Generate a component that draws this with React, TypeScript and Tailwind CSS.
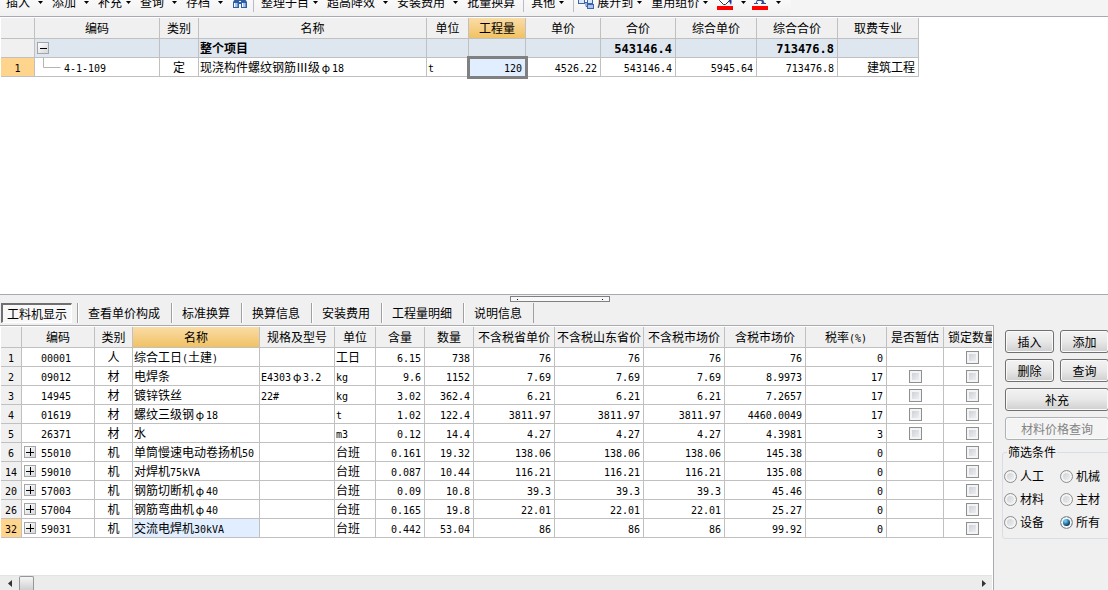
import React, { useState } from 'react';

type Align = 'left' | 'center' | 'right';

interface Column {
  name: string;
  width: number;
  align: Align;
  active?: boolean;
}

interface ToolItem {
  name?: string;
  icon?: React.FC;
  label?: string;
  arrow?: 'near' | 'far';
  separator?: boolean;
}

interface Resource {
  no: number;
  code: string;
  expandable?: boolean;
  values: string[];
  estimate?: boolean;
}

const BinocularsIcon: React.FC = () => (
  <svg width="16" height="16" viewBox="0 0 16 16" aria-hidden="true">
    <path d="M3 1h3v4h4V1h3v4l2 3v6h-6v-4H7v4H1V8l2-3z" fill="#2f5da3" />
    <path d="M2 9h4v4H2zM10 9h4v4h-4z" fill="#a9c6ee" />
    <path d="M2 9h1v4H2zM10 9h1v4h-1zM7 7h2v1H7z" fill="#fff" />
    <path d="M5 9h1v4H5zM13 9h1v4h-1z" fill="#6f97d0" />
  </svg>
);

const TreeIcon: React.FC = () => (
  <svg width="16" height="16" viewBox="0 0 16 16" aria-hidden="true">
    <path d="M3.5 3v4M6 8.5h4M8 8.5v4h2" stroke="#4a6aa8" fill="none" />
    <rect x="0.5" y="5.5" width="6" height="4" fill="#dbe8fb" stroke="#3d63ad" />
    <rect x="9.5" y="5.5" width="5" height="4" fill="#dbe8fb" stroke="#3d63ad" />
    <rect x="9.5" y="10.5" width="6" height="4" fill="#a9c4ee" stroke="#3d63ad" />
  </svg>
);

const FillIcon: React.FC = () => (
  <svg width="16" height="16" viewBox="0 0 16 16" aria-hidden="true">
    <path d="M2.5 6.5 8 1l5 5-4.5 4.5h-2z" fill="#fff" stroke="#333" />
    <path d="M11 4c4 0 4 3 3 7l-2-4z" fill="#1c2f9c" />
    <rect y="12" width="16" height="4" fill="#f00" />
  </svg>
);

const FontColorIcon: React.FC = () => (
  <svg width="16" height="16" viewBox="0 0 16 16" aria-hidden="true">
    <path d="M2 9.5h4M9 9.5h5M4 9.5 7.5 1h1" stroke="#2f4f8f" fill="none" />
    <path d="M8 1l3.5 8.5" stroke="#2f4f8f" strokeWidth="2.2" fill="none" />
    <path d="M5 6.5h5" stroke="#2f4f8f" fill="none" />
    <rect y="12" width="16" height="4" fill="#f00" />
  </svg>
);

const tools: ToolItem[] = [
  { label: '插入', arrow: 'far' },
  { label: '添加', arrow: 'far' },
  { label: '补充', arrow: 'near' },
  { label: '查询', arrow: 'far' },
  { label: '存档', arrow: 'far' },
  { name: '查找', icon: BinocularsIcon },
  { separator: true },
  { label: '整理子目', arrow: 'near' },
  { label: '超高降效', arrow: 'far' },
  { label: '安装费用', arrow: 'far' },
  { label: '批量换算' },
  { separator: true },
  { label: '其他', arrow: 'near' },
  { separator: true },
  { label: '展开到', icon: TreeIcon, arrow: 'near' },
  { label: '重用组价', arrow: 'near' },
  { name: '填充颜色', icon: FillIcon, arrow: 'far' },
  { name: '字体颜色', icon: FontColorIcon, arrow: 'far' },
];

const itemColumns: Column[] = [
  { name: '编码', width: 125, align: 'left' },
  { name: '类别', width: 39, align: 'center' },
  { name: '名称', width: 228, align: 'left' },
  { name: '单位', width: 42, align: 'left' },
  { name: '工程量', width: 57, align: 'right', active: true },
  { name: '单价', width: 75, align: 'right' },
  { name: '合价', width: 75, align: 'right' },
  { name: '综合单价', width: 81, align: 'right' },
  { name: '综合合价', width: 81, align: 'right' },
  { name: '取费专业', width: 81, align: 'right' },
];

const summaryRow = ['', '整个项目', '', '', '', '543146.4', '', '713476.8', ''];
const itemRow = ['定', '现浇构件螺纹钢筋Ⅲ级φ18', 't', '120', '4526.22', '543146.4', '5945.64', '713476.8', '建筑工程'];

const resourceColumns: Column[] = [
  { name: '编码', width: 73, align: 'left' },
  { name: '类别', width: 38, align: 'center' },
  { name: '名称', width: 127, align: 'left', active: true },
  { name: '规格及型号', width: 75, align: 'left' },
  { name: '单位', width: 41, align: 'left' },
  { name: '含量', width: 49, align: 'right' },
  { name: '数量', width: 49, align: 'right' },
  { name: '不含税省单价', width: 81, align: 'right' },
  { name: '不含税山东省价', width: 89, align: 'right' },
  { name: '不含税市场价', width: 81, align: 'right' },
  { name: '含税市场价', width: 81, align: 'right' },
  { name: '税率(%)', width: 81, align: 'right' },
  { name: '是否暂估', width: 57, align: 'center' },
  { name: '锁定数量', width: 57, align: 'center' },
];

const resources: Resource[] = [
  { no: 1, code: '00001', values: ['人', '综合工日(土建)', '', '工日', '6.15', '738', '76', '76', '76', '76', '0'] },
  { no: 2, code: '09012', estimate: true, values: ['材', '电焊条', 'E4303φ3.2', 'kg', '9.6', '1152', '7.69', '7.69', '7.69', '8.9973', '17'] },
  { no: 3, code: '14945', estimate: true, values: ['材', '镀锌铁丝', '22#', 'kg', '3.02', '362.4', '6.21', '6.21', '6.21', '7.2657', '17'] },
  { no: 4, code: '01619', estimate: true, values: ['材', '螺纹三级钢φ18', '', 't', '1.02', '122.4', '3811.97', '3811.97', '3811.97', '4460.0049', '17'] },
  { no: 5, code: '26371', estimate: true, values: ['材', '水', '', 'm3', '0.12', '14.4', '4.27', '4.27', '4.27', '4.3981', '3'] },
  { no: 6, code: '55010', expandable: true, values: ['机', '单筒慢速电动卷扬机50', '', '台班', '0.161', '19.32', '138.06', '138.06', '138.06', '145.38', '0'] },
  { no: 14, code: '59010', expandable: true, values: ['机', '对焊机75kVA', '', '台班', '0.087', '10.44', '116.21', '116.21', '116.21', '135.08', '0'] },
  { no: 20, code: '57003', expandable: true, values: ['机', '钢筋切断机φ40', '', '台班', '0.09', '10.8', '39.3', '39.3', '39.3', '45.46', '0'] },
  { no: 26, code: '57004', expandable: true, values: ['机', '钢筋弯曲机φ40', '', '台班', '0.165', '19.8', '22.01', '22.01', '22.01', '25.27', '0'] },
  { no: 32, code: '59031', expandable: true, values: ['机', '交流电焊机30kVA', '', '台班', '0.442', '53.04', '86', '86', '86', '99.92', '0'] },
];

const tabs = ['工料机显示', '查看单价构成', '标准换算', '换算信息', '安装费用', '工程量明细', '说明信息'];
const filters = ['人工', '机械', '材料', '主材', '设备', '所有'];

const alignClasses: Record<Align, string> = {
  left: 'pl-px text-left',
  center: 'text-center',
  right: 'pr-[3px] text-right',
};

const cellClasses = 'border-r border-b border-[#c0c0c0] p-0 whitespace-nowrap overflow-hidden';
const activeHeader = 'bg-linear-to-b from-[#fadca6] to-[#f1c262]';

// Latin runs use a narrow mono face, half the width of a Chinese character
const Mixed: React.FC<{ text: string; bold?: boolean }> = ({ text, bold }) => (
  <>
    {text.split(/(φ|[\x20-\x7e]+)/).filter(Boolean).map((part, i) => {
      if (part === 'φ') {
        return <span key={i} className="inline-block w-3 text-center text-[11px] leading-none">φ</span>;
      }
      if (/^[\x20-\x7e]+$/.test(part)) {
        return (
          <span key={i} className={`font-['DejaVu_Sans_Mono',monospace] leading-none ${bold ? 'text-[12px]' : 'text-[10px]'}`}>
            {part}
          </span>
        );
      }
      return <React.Fragment key={i}>{part}</React.Fragment>;
    })}
  </>
);

const HeaderRow: React.FC<{ columns: Column[] }> = ({ columns }) => (
  <thead>
    <tr className="h-[21px] bg-[#f0f0f0]">
      <th className={cellClasses} aria-label="行号" />
      {columns.map((col) => (
        <th key={col.name} className={`${cellClasses} font-normal ${col.active ? activeHeader : ''}`}>
          <Mixed text={col.name} />
        </th>
      ))}
    </tr>
  </thead>
);

const Columns: React.FC<{ first: number; columns: Column[] }> = ({ first, columns }) => (
  <colgroup>
    <col style={{ width: first }} />
    {columns.map((col) => (
      <col key={col.name} style={{ width: col.width }} />
    ))}
  </colgroup>
);

const Expander: React.FC<{ open?: boolean }> = ({ open }) => (
  <button
    aria-label={open ? '收起' : '展开'}
    className="block size-3 shrink-0 border border-[#a5a5a5] bg-linear-to-br from-white to-[#d4d7dc]"
  >
    <svg width="10" height="10" viewBox="0 0 10 10" className="block">
      <path d={open ? 'M2 5.5h7' : 'M1 5.5h8M5.5 1v8'} stroke="#000" fill="none" />
    </svg>
  </button>
);

const CheckBox: React.FC<{ label: string }> = ({ label }) => (
  <input
    type="checkbox"
    aria-label={label}
    className="mx-auto block size-[13px] appearance-none border border-[#8e8f8f] bg-linear-to-br from-[#c4c9d3] to-[#f6f6f6] shadow-[inset_0_0_0_2px_#f4f4f4] checked:bg-[#3c7fb1]"
  />
);

const Toolbar: React.FC = () => (
  <div className="flex h-[17px] items-end overflow-hidden border-b border-[#a9a9b0] bg-[#f4f4f5]">
    <div className="flex h-7 shrink-0 items-center bg-linear-to-b from-white to-[#f1f1f2] pr-1 pl-1.5">
      {tools.map((tool, i) => {
        if (tool.separator) {
          return <div key={i} className={`h-5 w-px bg-[#bcbcc4] ${tools[i + 1].icon ? 'mr-1' : 'mr-[7px]'}`} />;
        }
        const Icon = tool.icon;
        return (
          <button key={i} aria-label={tool.name} className={`flex items-center whitespace-nowrap ${tool.label ? 'pr-2' : 'pr-[5px]'}`}>
            {Icon && <Icon />}
            {tool.label && <span className={Icon ? 'ml-[3px]' : ''}>{tool.label}</span>}
            {tool.arrow && (
              <svg width="5" height="3" viewBox="0 0 5 3" className={tool.arrow === 'far' ? 'mr-px ml-2' : 'mr-px ml-1'}>
                <path d="M0 0h5L2.5 3z" />
              </svg>
            )}
          </button>
        );
      })}
    </div>
  </div>
);

const ItemTable: React.FC = () => (
  <table className="w-0 table-fixed border-separate border-spacing-0 leading-[18px]">
    <Columns first={34} columns={itemColumns} />
    <HeaderRow columns={itemColumns} />
    <tbody>
      <tr className="h-[19px] bg-[#dee6ef] font-bold">
        <td className={`${cellClasses} bg-[#f0f0f0]`} />
        <td className={cellClasses}>
          <div className="flex pl-0.5">
            <Expander open />
          </div>
        </td>
        {summaryRow.map((text, i) => (
          <td key={i} className={`${cellClasses} ${alignClasses[itemColumns[i + 1].align]}`}>
            <Mixed text={text} bold />
          </td>
        ))}
      </tr>
      <tr className="h-[19px]">
        <td className={`${cellClasses} bg-[#ffd58d] text-center`}>
          <Mixed text="1" />
        </td>
        <td className={cellClasses}>
          <div className="flex h-[18px] pl-2">
            <svg width="21" height="18" viewBox="0 0 21 18" aria-hidden="true">
              <path d="M0.5 0v9.5h17" stroke="#b4b4b4" fill="none" />
            </svg>
            <span>
              <Mixed text="4-1-109" />
            </span>
          </div>
        </td>
        {itemRow.map((text, i) => {
          const col = itemColumns[i + 1];
          return (
            <td
              key={i}
              className={`${cellClasses} ${alignClasses[col.align]} ${col.active ? 'bg-[#e0eeff] outline-3 -outline-offset-1 outline-[#808080]' : ''}`}
            >
              <Mixed text={text} />
            </td>
          );
        })}
      </tr>
    </tbody>
  </table>
);

const ResourceTable: React.FC = () => (
  <table className="w-0 table-fixed border-separate border-spacing-0 leading-[18px]">
    <Columns first={21} columns={resourceColumns} />
    <HeaderRow columns={resourceColumns} />
    <tbody>
      {resources.map((res) => {
        const selected = res.no === 32;
        return (
          <tr key={res.no} className="h-[19px]">
            <td className={`${cellClasses} text-center ${selected ? 'bg-[#ffd58d]' : 'bg-[#f0f0f0]'}`}>
              <Mixed text={String(res.no)} />
            </td>
            <td className={cellClasses}>
              <div className="flex h-[18px] items-center pl-0.5">
                <div className="w-[17px]">{res.expandable && <Expander />}</div>
                <span>
                  <Mixed text={res.code} />
                </span>
              </div>
            </td>
            {res.values.map((text, i) => {
              const col = resourceColumns[i + 1];
              return (
                <td key={i} className={`${cellClasses} ${alignClasses[col.align]} ${selected && col.active ? 'bg-[#e0eeff]' : ''}`}>
                  <Mixed text={text} />
                </td>
              );
            })}
            <td className={cellClasses}>{res.estimate && <CheckBox label={`是否暂估 ${res.code}`} />}</td>
            <td className={cellClasses}>
              <CheckBox label={`锁定数量 ${res.code}`} />
            </td>
          </tr>
        );
      })}
    </tbody>
  </table>
);

const TabBar: React.FC<{ current: string; onChange: (tab: string) => void }> = ({ current, onChange }) => (
  <div className="flex h-[22px] pl-px" role="tablist">
    {tabs.map((tab) => (
      <div key={tab} className={`flex h-5 border-r border-[#a0a0a0] ${tab === current ? 'pr-[5px]' : ''}`}>
        <button
          role="tab"
          aria-selected={tab === current}
          onClick={() => onChange(tab)}
          className={
            tab === current
              ? 'border-t-2 border-l-2 border-r border-b border-t-[#707070] border-l-[#707070] border-r-white border-b-white bg-[#f8f8f8] px-1 whitespace-nowrap'
              : 'border-l border-white pr-[11px] pl-[9px] whitespace-nowrap'
          }
        >
          {tab}
        </button>
      </div>
    ))}
  </div>
);

const PushButton: React.FC<{ label: string; className?: string; disabled?: boolean }> = ({ label, className = '', disabled }) => (
  <button
    disabled={disabled}
    className={`h-[23px] rounded-[3px] border border-[#707070] bg-linear-to-b from-[#f3f3f3] via-[#e8e8e8] to-[#cfcfcf] shadow-[inset_0_0_0_1px_#fafafa] disabled:border-[#adb2b5] disabled:from-[#f4f4f4] disabled:via-[#f4f4f4] disabled:to-[#f4f4f4] disabled:text-[#838383] ${className}`}
  >
    {label}
  </button>
);

const SidePanel: React.FC = () => {
  const [filter, setFilter] = useState('所有');

  return (
    <aside className="w-[114px] shrink-0 overflow-hidden pt-[5px] pl-2">
      <div className="ml-[3px] grid w-[104px] grid-cols-2 gap-1.5 pb-1">
        <PushButton label="插入" />
        <PushButton label="添加" />
        <PushButton label="删除" />
        <PushButton label="查询" />
        <PushButton label="补充" className="col-span-2" />
        <PushButton label="材料价格查询" className="col-span-2" disabled />
      </div>
      <fieldset className="w-[120px] rounded-[3px] border border-[#d5dfe5] pb-2">
        <legend className="ml-1 px-px leading-4">筛选条件</legend>
        <div className="grid grid-cols-[56px_56px] gap-y-[7px] pt-2 pl-px">
          {filters.map((name) => (
            <label key={name} className="flex items-center gap-[3px] leading-4">
              <input
                type="radio"
                name="filter"
                checked={filter === name}
                onChange={() => setFilter(name)}
                className="size-[13px] appearance-none rounded-full border border-[#8e8f8f] bg-linear-to-br from-[#c8ccd2] to-[#f6f6f6] shadow-[inset_0_0_0_2px_#f4f4f4] checked:bg-radial-[at_40%_35%] checked:from-[#5cc3ee] checked:from-10% checked:to-[#0c3b63] checked:to-50%"
              />
              {name}
            </label>
          ))}
        </div>
      </fieldset>
    </aside>
  );
};

const ScrollBar: React.FC = () => (
  <div className="flex h-[15px] items-center overflow-hidden border-t border-[#e3e3e3] bg-[#ececec]">
    <button aria-label="向左滚动" className="flex w-[19px] justify-center">
      <svg width="4" height="7" viewBox="0 0 4 7">
        <path d="M4 0v7L0 3.5z" fill="#333" />
      </svg>
    </button>
    <div className="h-3.5 w-[15px] rounded-t-[2px] border border-b-0 border-[#979797] bg-linear-to-b from-[#f5f5f5] to-[#d0d0d4]" />
    <button aria-label="向右滚动" className="ml-auto flex w-4 justify-center">
      <svg width="4" height="7" viewBox="0 0 4 7">
        <path d="M0 0v7l4-3.5z" fill="#333" />
      </svg>
    </button>
  </div>
);

const App: React.FC = () => {
  const [tab, setTab] = useState(tabs[0]);

  return (
    <div className="flex h-screen flex-col overflow-hidden bg-[#f0f0f0] font-['Noto_Sans_CJK_SC','Liberation_Sans',sans-serif] text-xs text-black">
      <Toolbar />
      <main className="min-h-0 flex-1 overflow-hidden bg-white pt-px pl-px">
        <ItemTable />
      </main>
      <section className="border-t border-[#a9a9b0]">
        <div className="flex h-2 justify-center pt-px pl-3">
          <div className="flex h-1.5 w-[100px] items-center justify-between border border-[#808080] bg-[#f8f8f8] px-1.5">
            <span className="size-px bg-[#000080]" />
            <span className="size-px bg-[#000080]" />
          </div>
        </div>
        <TabBar current={tab} onChange={setTab} />
        <div className="flex">
          <div className="flex min-w-0 flex-1 flex-col border-t border-r border-[#a9a9b0] bg-white pr-px">
            <div className="overflow-hidden pt-px pb-[37px] pl-px">
              <ResourceTable />
            </div>
            <ScrollBar />
          </div>
          <SidePanel />
        </div>
      </section>
    </div>
  );
};

export default App;
